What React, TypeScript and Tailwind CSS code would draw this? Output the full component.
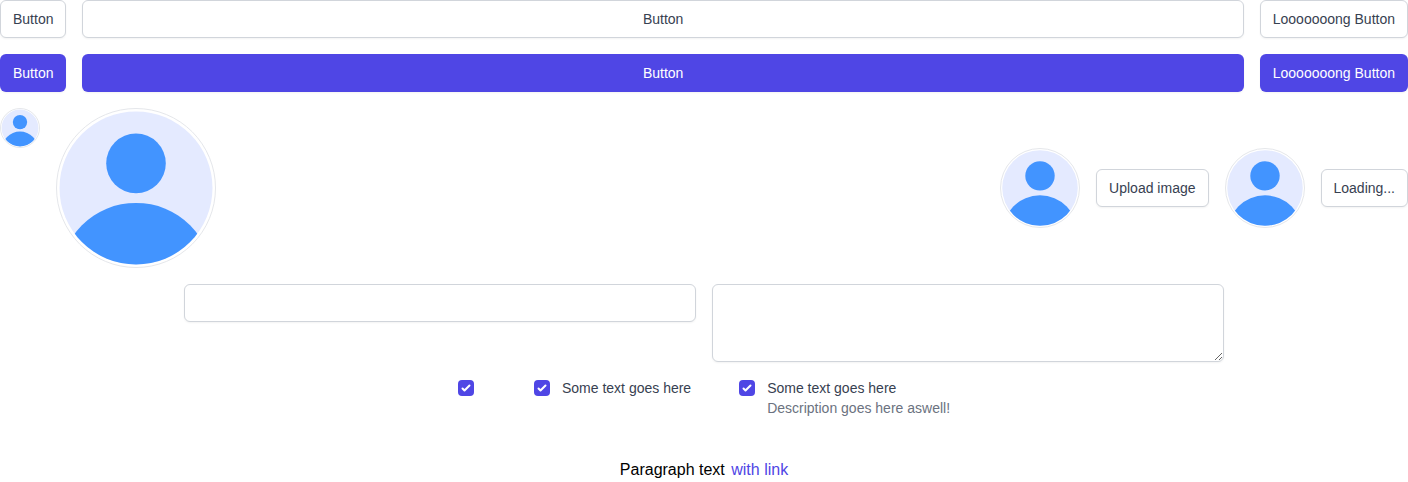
import React from 'react';
import clsx from 'clsx';

type ButtonProps = {
  primary?: boolean;
  className?: string;
  children: React.ReactNode;
};

function Button({ primary = false, className, children }: ButtonProps) {
  return (
    <button
      type="button"
      className={clsx(
        'inline-flex items-center justify-center whitespace-nowrap rounded-md border px-3 py-2 text-sm font-medium shadow-[0_1px_2px_0_rgb(0_0_0/0.05)]',
        primary
          ? 'border-transparent bg-[#4f46e5] text-white'
          : 'border-[#d1d5db] bg-white text-[#374151]',
        className,
      )}
    >
      {children}
    </button>
  );
}

function Avatar({ className }: { className: string }) {
  const id = React.useId();
  return (
    <span
      className={clsx(
        'block shrink-0 overflow-hidden rounded-full border border-[#e5e7eb] bg-white',
        className,
      )}
    >
      <svg viewBox="0 0 158 158" className="block h-full w-full">
        <clipPath id={id}>
          <circle cx="79" cy="79" r="76.5" />
        </clipPath>
        <circle cx="79" cy="79" r="76.5" fill="#e4eaff" />
        <g clipPath={`url(#${id})`} fill="#4294ff">
          <circle cx="79" cy="54.4" r="29.8" />
          <circle cx="79" cy="170.4" r="76.5" />
        </g>
      </svg>
    </span>
  );
}

function Checkbox({ label, description }: { label?: string; description?: string }) {
  return (
    <div className="flex items-start">
      <span className="flex h-5 items-center">
        <span className="block h-4 w-4 rounded bg-[#4f46e5]">
          <svg viewBox="0 0 16 16" fill="white" className="block h-full w-full">
            <path d="M12.207 4.793a1 1 0 010 1.414l-5 5a1 1 0 01-1.414 0l-2-2a1 1 0 011.414-1.414L6.5 9.086l4.293-4.293a1 1 0 011.414 0z" />
          </svg>
        </span>
      </span>
      <div className="ml-3 text-sm">
        {label && <p className="font-medium text-[#374151]">{label}</p>}
        {description && <p className="text-[#6b7280]">{description}</p>}
      </div>
    </div>
  );
}

const fieldClass =
  'block w-lg rounded-md border border-[#d1d5db] bg-white px-3 py-2 text-sm shadow-[0_1px_2px_0_rgb(0_0_0/0.05)]';

export default function App() {
  return (
    <main className="flex flex-col gap-4 bg-white font-['Liberation_Sans',Arial,sans-serif] text-black">
      <div className="flex gap-4">
        <Button>Button</Button>
        <Button className="flex-1">Button</Button>
        <Button>Looooooong Button</Button>
      </div>
      <div className="flex gap-4">
        <Button primary>Button</Button>
        <Button primary className="flex-1">Button</Button>
        <Button primary>Looooooong Button</Button>
      </div>
      <div className="flex gap-4">
        <Avatar className="h-10 w-10" />
        <Avatar className="h-40 w-40" />
        <div className="ml-auto flex items-center gap-4">
          <Avatar className="h-20 w-20" />
          <Button>Upload image</Button>
          <Avatar className="h-20 w-20" />
          <Button>Loading...</Button>
        </div>
      </div>
      <div className="flex items-start justify-center gap-4">
        <input type="text" className={clsx(fieldClass, 'h-[38px]')} />
        <textarea className={clsx(fieldClass, 'h-[78px] resize')} />
      </div>
      <div className="flex h-16 justify-center gap-12">
        <Checkbox />
        <Checkbox label="Some text goes here" />
        <Checkbox label="Some text goes here" description="Description goes here aswell!" />
      </div>
      <p className="text-center text-base">
        Paragraph text <a className="ml-0.5 font-medium text-[#4f46e5]">with link</a>
      </p>
    </main>
  );
}
